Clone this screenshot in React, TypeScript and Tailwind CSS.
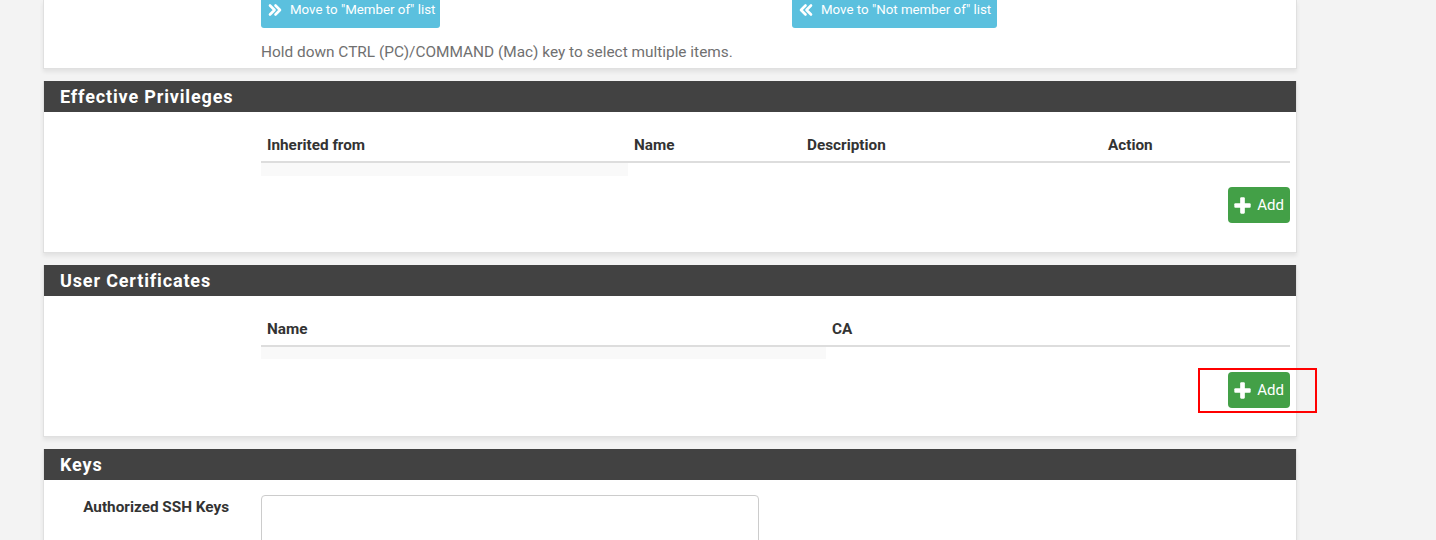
import React from "react";

const font = { fontFamily: "Roboto, 'Noto Sans', sans-serif" };

function DoubleRight() {
  return (
    <svg width="14" height="14" viewBox="0 0 14 14" fill="none" stroke="white" strokeWidth="2.6" strokeLinecap="round" strokeLinejoin="round">
      <path d="M2 2.5 L6.5 7 L2 11.5" />
      <path d="M7.5 2.5 L12 7 L7.5 11.5" />
    </svg>
  );
}
function DoubleLeft() {
  return (
    <svg width="14" height="14" viewBox="0 0 14 14" fill="none" stroke="white" strokeWidth="2.6" strokeLinecap="round" strokeLinejoin="round">
      <path d="M12 2.5 L7.5 7 L12 11.5" />
      <path d="M6.5 2.5 L2 7 L6.5 11.5" />
    </svg>
  );
}
function Plus() {
  return (
    <svg width="17" height="17" viewBox="0 0 16 16" fill="white">
      <rect x="5.8" y="0.3" width="4.4" height="15.4" rx="1" />
      <rect x="0.3" y="5.8" width="15.4" height="4.4" rx="1" />
    </svg>
  );
}

function AddButton() {
  return (
    <button className="flex h-[36px] w-[62px] items-center justify-center gap-[6px] rounded-[4px] bg-[#43a047] text-[15px] text-white">
      <Plus />
      <span>Add</span>
    </button>
  );
}

function Heading({ title }: { title: string }) {
  return (
    <div className="flex h-[31px] items-center bg-[#424242] pl-[16px] text-[18px] font-bold tracking-[0.85px] text-white">
      {title}
    </div>
  );
}

function Panel({ children, className = "" }: { children: React.ReactNode; className?: string }) {
  return (
    <div className={"border border-t-0 border-[#e0e0e0] bg-white shadow-[0_3px_4px_rgba(0,0,0,0.07)] " + className}>
      {children}
    </div>
  );
}

export default function App() {
  return (
    <div className="h-[540px] w-full overflow-hidden bg-[#f3f3f3] text-[#333]" style={font}>
      <div className="ml-[43px] flex w-[1254px] flex-col gap-[12px]">
        {/* top panel (cut off) */}
        <Panel className="h-[69px]">
          <div className="-mt-[6px] flex">
            <div className="ml-[217px] w-[531px]">
              <button className="flex h-[34px] items-center gap-[8px] rounded-[3px] bg-[#5bc0de] pb-[2px] pl-[7px] pr-[5px] text-[13.3px] text-white">
                <DoubleRight />
                <span>Move to "Member of" list</span>
              </button>
            </div>
            <button className="flex h-[34px] items-center gap-[8px] rounded-[3px] bg-[#5bc0de] pb-[2px] pl-[7px] pr-[6px] text-[13.3px] text-white">
              <DoubleLeft />
              <span>Move to "Not member of" list</span>
            </button>
          </div>
          <div className="ml-[217px] mt-[13px] text-[15.4px] text-[#707070]">
            Hold down CTRL (PC)/COMMAND (Mac) key to select multiple items.
          </div>
        </Panel>

        {/* Effective Privileges */}
        <Panel className="h-[172px]">
          <Heading title="Effective Privileges" />
          <div className="pl-[217px] pr-[6px] pt-[17px]">
            <div className="flex h-[34px] items-center border-b-2 border-[#dddddd] text-[15.3px] font-bold">
              <div className="w-[367px] pl-[6px]">Inherited from</div>
              <div className="w-[173px] pl-[6px]">Name</div>
              <div className="w-[301px] pl-[6px]">Description</div>
              <div className="pl-[6px]">Action</div>
            </div>
            <div className="h-[13px] w-[367px] bg-[#f9f9f9]" />
            <div className="mt-[11px] flex justify-end">
              <AddButton />
            </div>
          </div>
        </Panel>

        {/* User Certificates */}
        <Panel className="h-[172px]">
          <Heading title="User Certificates" />
          <div className="pl-[217px] pr-[6px] pt-[17px]">
            <div className="flex h-[34px] items-center border-b-2 border-[#dddddd] text-[15.3px] font-bold">
              <div className="w-[565px] pl-[6px]">Name</div>
              <div className="pl-[6px]">CA</div>
            </div>
            <div className="h-[12px] w-[565px] bg-[#f9f9f9]" />
            <div className="mt-[13px] flex justify-end">
              <div className="relative">
                <AddButton />
                <div className="pointer-events-none absolute left-[-30px] top-[-4px] h-[45px] w-[119px] border-2 border-[#ff0000]" />
              </div>
            </div>
          </div>
        </Panel>

        {/* Keys */}
        <Panel className="h-[120px]">
          <Heading title="Keys" />
          <div className="flex pt-[15px]">
            <div className="w-[185px] pt-[1px] text-right text-[15.3px] font-bold">Authorized SSH Keys</div>
            <div className="ml-[32px] h-[80px] w-[498px] rounded-[4px] border border-[#cccccc]" />
          </div>
        </Panel>
      </div>
    </div>
  );
}
